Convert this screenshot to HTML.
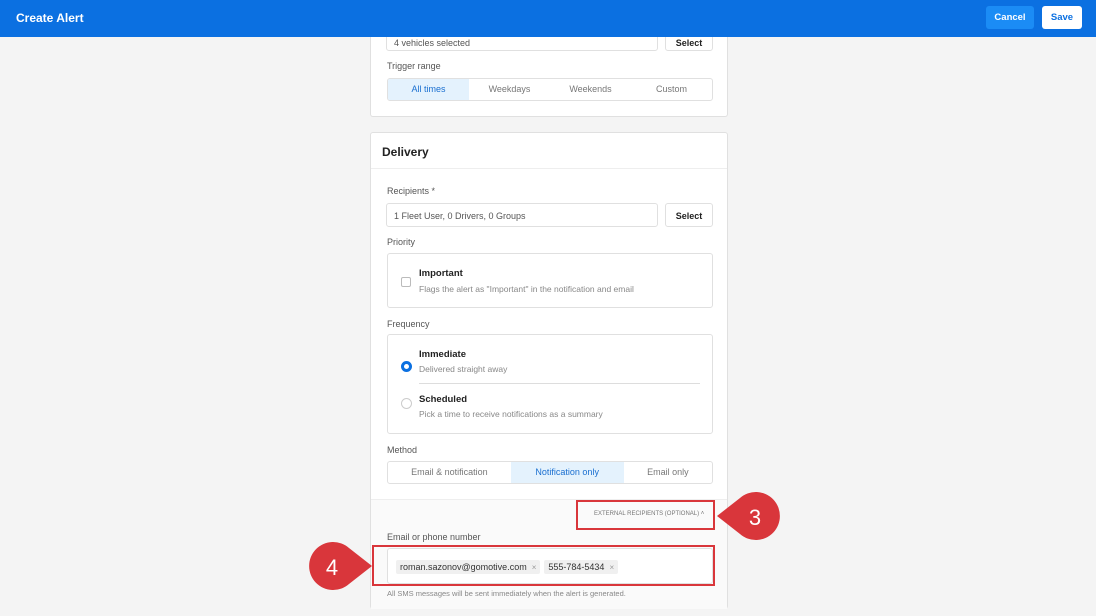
<!DOCTYPE html>
<html><head><style>
*{box-sizing:border-box;margin:0;padding:0}
body{width:1096px;height:616px;overflow:hidden;background:#f4f4f4;font-family:"Liberation Sans",sans-serif;position:relative;color:#222}
.hdr{position:absolute;left:0;top:0;width:1096px;height:37px;background:#0b70e1;z-index:5}
.hdr .t{position:absolute;left:16px;top:11px;color:#fff;font-size:12px;font-weight:bold}
.btn{position:absolute;top:6px;height:23px;border-radius:3px;font-size:9.5px;font-weight:bold;line-height:23px;text-align:center}
.card{position:absolute;left:370px;width:358px;background:#fff;border:1px solid #e0e0e0;border-radius:3px}
.abs{position:absolute}
.inp{position:absolute;border:1px solid #e0e0e0;border-radius:3px;background:#fff;font-size:9px;color:#555}
.lbl{position:absolute;font-size:9px;color:#555}
.seg{position:absolute;display:flex;border:1px solid #e0e0e0;border-radius:3px;height:23px;font-size:9px;color:#777;overflow:hidden}
.seg div{flex:1;text-align:center;line-height:21px}
.on{background:#e4f2fd;color:#1a6fd0}
.chip{display:inline-block;background:#f0f0f0;border-radius:2px;padding:0 4px;height:14px;line-height:14px;font-size:9px;color:#333;margin-right:4px}
.chip i{font-style:normal;color:#999;margin-left:5px;font-size:8px}
.box{position:absolute;border:2px solid #d9363b}
</style></head><body>
<div class="hdr"><div class="t">Create Alert</div>
<div class="btn" style="left:986px;width:48px;background:#1b8cf5;color:#fff">Cancel</div>
<div class="btn" style="left:1042px;width:40px;background:#fff;color:#0b70e1">Save</div></div>
<div class="card" style="top:20px;height:97px;border-top:none">
<div class="inp" style="left:15px;top:8px;width:272px;height:23px;padding:9px 7px 0">4 vehicles selected</div>
<div class="inp" style="left:294px;top:8px;width:48px;height:23px;text-align:center;padding-top:9px;color:#222;font-weight:bold">Select</div>
<div class="lbl" style="left:16px;top:41px">Trigger range</div>
<div class="seg" style="left:16px;top:58px;width:326px"><div class="on">All times</div><div>Weekdays</div><div>Weekends</div><div>Custom</div></div>
</div>
<div class="card" style="top:132px;height:477px">
<div class="abs" style="left:11px;top:12px;font-size:12px;font-weight:bold">Delivery</div>
<div class="abs" style="left:0;top:35px;width:356px;border-top:1px solid #eee"></div>
<div class="lbl" style="left:16px;top:53px">Recipients *</div>
<div class="inp" style="left:15px;top:70px;width:272px;height:24px;padding:7px 7px">1 Fleet User, 0 Drivers, 0 Groups</div>
<div class="inp" style="left:294px;top:70px;width:48px;height:24px;text-align:center;padding-top:7px;color:#222;font-weight:bold">Select</div>
<div class="lbl" style="left:16px;top:104px">Priority</div>
<div class="inp" style="left:16px;top:120px;width:326px;height:55px">
<div class="abs" style="left:13px;top:23px;width:10px;height:10px;border:1px solid #bbb;border-radius:2px"></div>
<div class="abs" style="left:31px;top:14px;font-size:9.5px;font-weight:bold;color:#222">Important</div>
<div class="abs" style="left:31px;top:30px;font-size:8.5px;color:#888">Flags the alert as "Important" in the notification and email</div></div>
<div class="lbl" style="left:16px;top:186px">Frequency</div>
<div class="inp" style="left:16px;top:201px;width:326px;height:100px">
<div class="abs" style="left:13px;top:26px;width:11px;height:11px;border:3px solid #0b70e1;border-radius:50%"></div>
<div class="abs" style="left:31px;top:14px;font-size:9.5px;font-weight:bold;color:#222">Immediate</div>
<div class="abs" style="left:31px;top:29px;font-size:8.5px;color:#888">Delivered straight away</div>
<div class="abs" style="left:31px;top:48px;width:281px;border-top:1px solid #ddd"></div>
<div class="abs" style="left:13px;top:63px;width:11px;height:11px;border:1px solid #ccc;border-radius:50%"></div>
<div class="abs" style="left:31px;top:59px;font-size:9.5px;font-weight:bold;color:#222">Scheduled</div>
<div class="abs" style="left:31px;top:74px;font-size:8.5px;color:#888">Pick a time to receive notifications as a summary</div></div>
<div class="lbl" style="left:16px;top:312px">Method</div>
<div class="seg" style="left:16px;top:328px;width:326px"><div style="flex:1.25">Email &amp; notification</div><div class="on" style="flex:1.15">Notification only</div><div style="flex:0.9">Email only</div></div>
<div class="abs" style="left:0;top:366px;width:356px;height:110px;background:#fafafa;border-top:1px solid #eee"></div>
<div class="abs" style="left:223px;top:378px;font-size:6px;color:#777;white-space:nowrap">EXTERNAL RECIPIENTS (OPTIONAL) ˄</div>
<div class="lbl" style="left:16px;top:399px">Email or phone number</div>
<div class="inp" style="left:16px;top:415px;width:326px;height:36px;padding:11px 8px"><span class="chip">roman.sazonov@gomotive.com<i>×</i></span><span class="chip">555-784-5434<i>×</i></span></div>
<div class="abs" style="left:16px;top:456px;font-size:7.5px;color:#888">All SMS messages will be sent immediately when the alert is generated.</div>
</div>
<div class="box" style="left:576px;top:500px;width:139px;height:30px"></div>
<div class="box" style="left:372px;top:545px;width:343px;height:41px"></div>
<svg class="abs" style="left:0;top:0" width="1096" height="616">
<path d="M717 516 L740 498 A24 24 0 1 1 740 534 Z" fill="#d9363b"/>
<text x="755" y="525" font-family="Liberation Sans" font-size="22" fill="#fff" text-anchor="middle">3</text>
<path d="M372 566 L349 548 A24 24 0 1 0 349 584 Z" fill="#d9363b"/>
<text x="332" y="575" font-family="Liberation Sans" font-size="22" fill="#fff" text-anchor="middle">4</text>
</svg>
</body></html>
